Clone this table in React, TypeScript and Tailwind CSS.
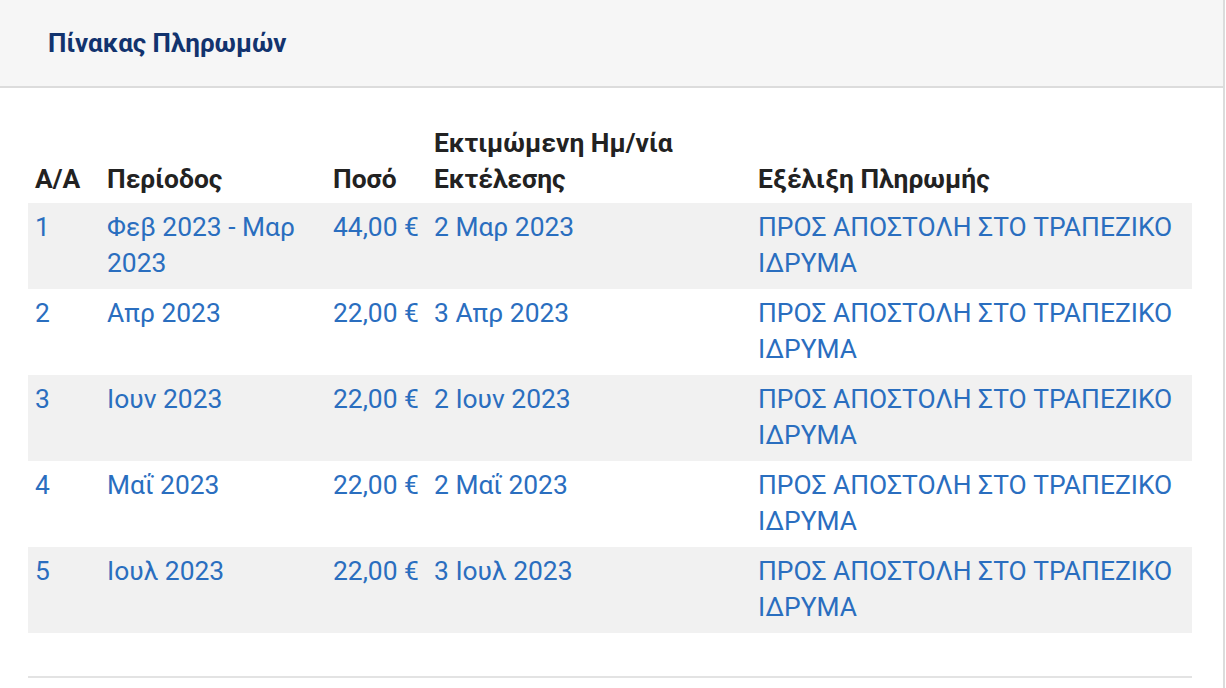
import React from 'react';

type Payment = {
  id: number;
  period: string;
  amount: string;
  date: string;
  status: string;
};

const payments: Payment[] = [
  { id: 1, period: 'Φεβ 2023 - Μαρ 2023', amount: '44,00 €', date: '2 Μαρ 2023', status: 'ΠΡΟΣ ΑΠΟΣΤΟΛΗ ΣΤΟ ΤΡΑΠΕΖΙΚΟ ΙΔΡΥΜΑ' },
  { id: 2, period: 'Απρ 2023', amount: '22,00 €', date: '3 Απρ 2023', status: 'ΠΡΟΣ ΑΠΟΣΤΟΛΗ ΣΤΟ ΤΡΑΠΕΖΙΚΟ ΙΔΡΥΜΑ' },
  { id: 3, period: 'Ιουν 2023', amount: '22,00 €', date: '2 Ιουν 2023', status: 'ΠΡΟΣ ΑΠΟΣΤΟΛΗ ΣΤΟ ΤΡΑΠΕΖΙΚΟ ΙΔΡΥΜΑ' },
  { id: 4, period: 'Μαΐ 2023', amount: '22,00 €', date: '2 Μαΐ 2023', status: 'ΠΡΟΣ ΑΠΟΣΤΟΛΗ ΣΤΟ ΤΡΑΠΕΖΙΚΟ ΙΔΡΥΜΑ' },
  { id: 5, period: 'Ιουλ 2023', amount: '22,00 €', date: '3 Ιουλ 2023', status: 'ΠΡΟΣ ΑΠΟΣΤΟΛΗ ΣΤΟ ΤΡΑΠΕΖΙΚΟ ΙΔΡΥΜΑ' },
];

const App: React.FC = () => {
  return (
    <div className="w-[1225px] min-h-[688px] bg-white border-r-2 border-[#dcdcdc] font-['Roboto',sans-serif]">
      {/* Panel header */}
      <div className="h-[88px] bg-[#f6f6f6] border-b-2 border-[#dcdcdc] flex items-center pl-[48px]">
        <h2 className="text-[26px] font-bold text-[#12336e]">Πίνακας Πληρωμών</h2>
      </div>

      {/* Payments table */}
      <div className="pl-[28px] pr-[31px] pt-[29px]">
        <table className="w-full table-fixed border-collapse text-[26.4px] leading-[36px]">
          <thead>
            <tr className="text-left text-[#222222] font-bold align-bottom">
              <th className="w-[71px] px-[7px] pt-[8px] pb-[6px]">Α/Α</th>
              <th className="w-[226px] px-[8px] pt-[8px] pb-[6px]">Περίοδος</th>
              <th className="w-[101px] px-[8px] pt-[8px] pb-[6px]">Ποσό</th>
              <th className="w-[324px] px-[8px] pt-[8px] pb-[6px]">
                Εκτιμώμενη Ημ/νία
                <br />
                Εκτέλεσης
              </th>
              <th className="px-[8px] pt-[8px] pb-[6px]">Εξέλιξη Πληρωμής</th>
            </tr>
          </thead>
          <tbody>
            {payments.map((p) => (
              <tr key={p.id} className={`align-top text-[#2a6ebf] ${p.id % 2 === 1 ? 'bg-[#f1f1f1]' : 'bg-white'}`}>
                <td className="px-[7px] pt-[6px] pb-[8px]">{p.id}</td>
                <td className="px-[8px] pt-[6px] pb-[8px]">{p.period}</td>
                <td className="px-[8px] pt-[6px] pb-[8px] whitespace-nowrap">{p.amount}</td>
                <td className="px-[8px] pt-[6px] pb-[8px]">{p.date}</td>
                <td className="px-[8px] pt-[6px] pb-[8px]">{p.status}</td>
              </tr>
            ))}
          </tbody>
        </table>
        <div className="mt-[43px] border-b-2 border-[#e3e3e3]" />
      </div>
    </div>
  );
};

export default App;
